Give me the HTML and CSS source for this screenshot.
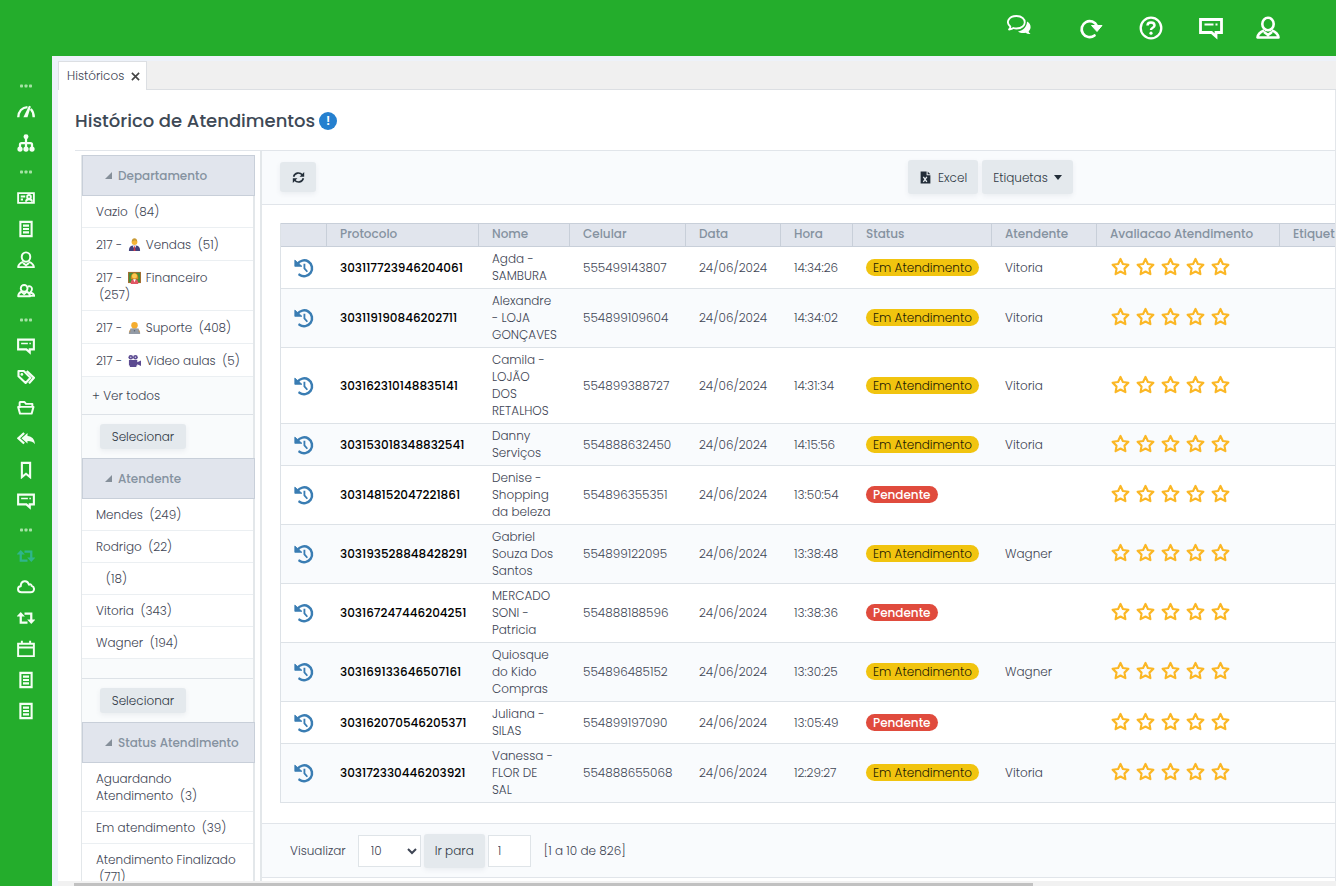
FILE: index.html
```html
<!DOCTYPE html>
<html lang="pt-BR">
<head>
  <meta charset="UTF-8">
  <meta name="viewport" content="width=device-width, initial-scale=1.0">
  <title>Histórico de Atendimentos</title>
  <link rel="stylesheet" href="styles.css">
</head>
<body>

<!-- icons -->
<svg class="sprite" aria-hidden="true">
  <symbol id="i-dots" viewBox="0 0 24 24"><g fill="currentColor"><rect x="4" y="10" width="4" height="4" rx="1"/><rect x="10" y="10" width="4" height="4" rx="1"/><rect x="16" y="10" width="4" height="4" rx="1"/></g></symbol>
  <symbol id="i-gauge" viewBox="0 0 24 24"><path d="M1.700 19C2 11 7 6 14 5.500M22.300 19c0-5-1.500-8.500-4-11" fill="none" stroke="currentColor" stroke-width="3.200"/><path d="M8.500 19 16 3.500l2.500 1L14 19z" fill="currentColor"/></symbol>
  <symbol id="i-tree" viewBox="0 0 24 24"><path d="M12 4v16M4 20v-6q0-2 2-2h12q2 0 2 2v6" fill="none" stroke="currentColor" stroke-width="3"/><g fill="currentColor"><circle cx="12" cy="3.500" r="3.300"/><circle cx="4" cy="20" r="3.500"/><circle cx="12" cy="20" r="3.500"/><circle cx="20" cy="20" r="3.500"/></g></symbol>
  <symbol id="i-card" viewBox="0 0 24 24"><g fill="none" stroke="currentColor" stroke-width="2.500"><path d="M1.500 5.500h21v13h-21z"/><circle cx="16" cy="10.500" r="2.500"/><path d="M12 17c0-4.500 8-4.500 8 0M5 10h6M5 14h3"/></g></symbol>
  <symbol id="i-list" viewBox="0 0 24 24"><path d="M4.500 2.500h15v19h-15zM8 7.500h8M8 12h8M8 16.500h8" fill="none" stroke="currentColor" stroke-width="2.800"/></symbol>
  <symbol id="i-user" viewBox="0 0 24 24"><g fill="none" stroke="currentColor" stroke-width="2.600" stroke-linejoin="round"><ellipse cx="12" cy="8" rx="5.700" ry="6.200"/><path d="M8 14.500C4 16 2 18 1.500 21.500h21C22 18 20 16 16 14.500M8 16l4 3 4-3"/></g></symbol>
  <symbol id="i-users" viewBox="0 0 24 24"><g fill="none" stroke="currentColor" stroke-width="2.500" stroke-linejoin="round"><circle cx="9.500" cy="8.500" r="4.500"/><path d="M14.500 6c6-2 7 5 3 8 3 .500 5 2 5.500 4.500h-5M6 13c-3 1-4.200 3-4.500 6h16c-.500-3-1.500-5-4.500-6l-3.500 3z"/></g></symbol>
  <symbol id="i-comment" viewBox="0 0 24 24"><g fill="none" stroke="currentColor" stroke-width="2.800"><path d="M1.500 3.500h21v13H17v4L12.500 16.500h-11z"/><path d="M5.500 8.500h9M16.500 8.500h2" stroke-width="2"/></g></symbol>
  <symbol id="i-tags" viewBox="0 0 24 24"><path d="M2 4h7l9 9-6.500 7L2 11z" fill="none" stroke="currentColor" stroke-width="2.800" stroke-linejoin="round"/><path d="m13 4 9.500 9-6.500 7.500" fill="none" stroke="currentColor" stroke-width="3"/><circle cx="6.500" cy="8.500" r="1.800" fill="currentColor"/></symbol>
  <symbol id="i-folder" viewBox="0 0 24 24"><path d="M3.500 12V5q0-1 1-1H10l2 2.500h8.500V10M4 19.500h15.500l2.500-9H1.500z" fill="none" stroke="currentColor" stroke-width="2.600" stroke-linejoin="round"/></symbol>
  <symbol id="i-reply" viewBox="0 0 24 24"><path d="M14 4v4c6 .500 9.500 4 10 11-2-3.500-5.500-4.500-10-4.500V18l-8-7z" fill="currentColor"/><path d="m9.500 4-7.500 7 7.500 7" fill="none" stroke="currentColor" stroke-width="3"/></symbol>
  <symbol id="i-bookmark" viewBox="0 0 24 24"><path d="M6.500 2.500h11v19L12 17l-5.500 4.500z" fill="none" stroke="currentColor" stroke-width="2.800"/></symbol>
  <symbol id="i-retweet" viewBox="0 0 24 24"><path d="M14 18H5V9M10 6h9v9" fill="none" stroke="currentColor" stroke-width="3"/><path d="M-.500 10 5 4l5.500 6zM13.500 14h11L19 20z" fill="currentColor"/></symbol>
  <symbol id="i-cloud" viewBox="0 0 24 24"><path d="M6 19c-6 0-6-7.500-1-8C5 3 14 2 16 9c2-1.500 3.500 0 3.500 1.500C24 12 24 19 18 19z" fill="none" stroke="currentColor" stroke-width="2.600" stroke-linejoin="round"/></symbol>
  <symbol id="i-calendar" viewBox="0 0 24 24"><path d="M1.500 5h21v16.500h-21zM1.500 10h21M6.500 1v5M17.500 1v5" fill="none" stroke="currentColor" stroke-width="2.600"/></symbol>
  <symbol id="i-chats" viewBox="0 0 24 24"><path d="M11 18.500c2 1.500 5 2 7.500 1.300 1.500 1 3 1.400 5 1.200-1-.800-1.800-1.700-1.800-2.700 3.300-3.300 2-8.300-1.700-9.800 0 5-3.500 9-9 10z" fill="currentColor"/><path d="M9.500 3c11 0 11 12.500 0 12.500-1 0-2-.100-3-.500-1 .800-2.500 1.300-4.500 1.500 1-1 1.500-2 1.300-3C-1.500 9.500 1.500 3 9.500 3z" fill="none" stroke="currentColor" stroke-width="1.800" stroke-linejoin="round"/></symbol>
  <symbol id="i-reload" viewBox="0 0 24 24"><path d="M15.500 19.500A8 8 0 1 1 18 10" fill="none" stroke="currentColor" stroke-width="2.700" stroke-linecap="round"/><path d="M12.500 9.500H23L18 15.500z" fill="currentColor" stroke="currentColor" stroke-linejoin="round"/></symbol>
  <symbol id="i-help" viewBox="0 0 24 24"><g fill="none" stroke="currentColor" stroke-width="2.300"><circle cx="12" cy="12" r="10.300"/><path d="M8.500 9.500c0-4 7-4 7 0 0 2.500-3.500 2-3.500 4.500" stroke-width="2.500"/></g><circle cx="12" cy="17.200" r="1.600" fill="currentColor"/></symbol>
  <symbol id="i-history" viewBox="0 0 24 24"><path d="M4 7.500A9.500 9.500 0 1 1 6.500 20" fill="none" stroke="currentColor" stroke-width="3" stroke-linecap="round"/><path d="M1 2.500 9.500 10H1z" fill="currentColor" stroke="currentColor" stroke-linejoin="round"/><path d="M12.500 7v5.500l3.500 4" fill="none" stroke="currentColor" stroke-width="2.200"/></symbol>
  <symbol id="i-sync" viewBox="0 0 24 24"><path d="M3 10.500C5 3 14 1.500 19 7M21 13.500C19 21 10 22.500 5 17" fill="none" stroke="currentColor" stroke-width="3"/><path d="M22.500 2v8.500H14zM1.500 22v-8.500H10z" fill="currentColor"/></symbol>
  <symbol id="i-star" viewBox="0 0 24 24"><path d="m12 2.500 3 6.300 7 1-5 4.900 1.200 7-6.200-3.300-6.200 3.300 1.200-7-5-4.900 7-1z" fill="none" stroke="currentColor" stroke-width="2.700" stroke-linejoin="round"/></symbol>
  <symbol id="i-excel" viewBox="0 0 24 24"><path d="M3 1h11v7h7v15H3z" fill="currentColor"/><path d="M16 1v5h5z" fill="currentColor"/><path d="m8 11 6.500 9M14.500 11 8 20" stroke="#e4e9ed" stroke-width="2.500"/></symbol>
  <symbol id="e-vendas" viewBox="0 0 14 14"><path d="M1 14c0-4 1-6 6-6s6 2 6 6z" fill="#42427c"/><path d="m5 8 2 4 2-4z" fill="#fff"/><path d="M6.500 9h1l.500 5H6z" fill="#d13a4a"/><circle cx="7" cy="4.500" r="3" fill="#f5b638"/><path d="M4 4c0-5 6-5 6 0L7.500 2.500z" fill="#c99a35"/></symbol>
  <symbol id="e-financeiro" viewBox="0 0 14 14"><path d="M0 1h14v12H0z" fill="#a86e32"/><path d="M1 2h12v10H1z" fill="#498c38"/><path d="M3 14c0-4 1-5 4-5s4 1 4 5z" fill="#e15765"/><path d="M3 9c-1-9 9-9 8 0z" fill="#d8891f"/><circle cx="7" cy="5.500" r="2.700" fill="#f9c950"/><path d="m5.500 9 1.500 3 1.500-3z" fill="#fff"/></symbol>
  <symbol id="e-suporte" viewBox="0 0 14 14"><path d="M1 14c0-5 2-6 6-6s6 1 6 6z" fill="#b98a49"/><circle cx="7" cy="4.500" r="3.500" fill="#f5ad2e"/><path d="M2.500 8h9v4h1.500v2H1v-2h1.500z" fill="#939ba6"/><circle cx="7" cy="10.500" r=".8" fill="#5c6470"/></symbol>
  <symbol id="e-video" viewBox="0 0 14 14"><g fill="#5c4b91"><circle cx="3" cy="3.500" r="2.500"/><circle cx="8" cy="3.500" r="2.500"/><path d="M1 6.500h9v6H1zM10 9l4-2v6l-4-2zM2 12h7v2H2z"/></g><g fill="#d5cfea"><circle cx="3" cy="3.500" r=".8"/><circle cx="8" cy="3.500" r=".8"/></g></symbol>
</svg>

<header class="topbar">
  <button class="top-btn top-chat" aria-label="Conversas"><svg><use href="#i-chats"/></svg></button>
  <button class="top-btn" aria-label="Recarregar"><svg><use href="#i-reload"/></svg></button>
  <button class="top-btn" aria-label="Ajuda"><svg><use href="#i-help"/></svg></button>
  <button class="top-btn" aria-label="Mensagens"><svg><use href="#i-comment"/></svg></button>
  <button class="top-btn top-user" aria-label="Usuário"><svg><use href="#i-user"/></svg></button>
</header>

<div class="layout">
  <nav class="sidebar" id="sidebar"></nav>

  <main class="main">
    <div class="tabs">
      <div class="tab">Históricos
        <button class="tab-close" aria-label="Fechar"><svg viewBox="0 0 10 10"><path d="m1 1 8 8M9 1 1 9" stroke="currentColor" stroke-width="1.800"/></svg></button>
      </div>
    </div>

    <div class="page">
      <div class="page-title">
        <h1>Histórico de Atendimentos</h1>
        <span class="info">!</span>
      </div>

      <div class="content">
        <aside class="filters">
          <section class="filter">
            <h2>Departamento</h2>
            <ul>
              <li><a href="#">Vazio&nbsp; (84)</a></li>
              <li class="with-icon"><a href="#">217 - <svg><use href="#e-vendas"/></svg> Vendas&nbsp; (51)</a></li>
              <li class="with-icon"><a href="#">217 - <svg><use href="#e-financeiro"/></svg> Financeiro <br>&nbsp;(257)</a></li>
              <li class="with-icon"><a href="#">217 - <svg><use href="#e-suporte"/></svg> Suporte&nbsp; (408)</a></li>
              <li class="with-icon"><a href="#">217 - <svg><use href="#e-video"/></svg> Video aulas&nbsp; (5)</a></li>
            </ul>
            <div class="see-all"><a href="#">+ Ver todos</a></div>
            <div class="filter-action"><button class="btn btn-small">Selecionar</button></div>
          </section>
          <section class="filter">
            <h2>Atendente</h2>
            <ul>
              <li><a href="#">Mendes&nbsp; (249)</a></li>
              <li><a href="#">Rodrigo&nbsp; (22)</a></li>
              <li><a href="#">&nbsp;&nbsp; (18)</a></li>
              <li><a href="#">Vitoria&nbsp; (343)</a></li>
              <li><a href="#">Wagner&nbsp; (194)</a></li>
            </ul>
            <div class="filter-gap"></div>
            <div class="filter-action"><button class="btn btn-small">Selecionar</button></div>
          </section>
          <section class="filter">
            <h2>Status Atendimento</h2>
            <ul>
              <li><a href="#">Aguardando<br>Atendimento&nbsp; (3)</a></li>
              <li><a href="#">Em atendimento&nbsp; (39)</a></li>
              <li><a href="#">Atendimento Finalizado<br>&nbsp;(771)</a></li>
            </ul>
          </section>
        </aside>

        <div class="grid-area">
          <div class="toolbar">
            <button class="btn btn-refresh" aria-label="Atualizar"><svg><use href="#i-sync"/></svg></button>
            <div class="toolbar-group">
              <button class="btn"><svg><use href="#i-excel"/></svg>Excel</button>
              <button class="btn">Etiquetas<span class="caret"></span></button>
            </div>
          </div>

          <div class="table-wrap">
            <table class="grid">
              <colgroup>
                <col class="c-icon"><col class="c-prot"><col class="c-nome"><col class="c-cel"><col class="c-data">
                <col class="c-hora"><col class="c-status"><col class="c-atend"><col class="c-aval"><col class="c-etiq">
              </colgroup>
              <thead>
                <tr>
                  <th></th><th>Protocolo</th><th>Nome</th><th>Celular</th><th>Data</th><th>Hora</th>
                  <th>Status</th><th>Atendente</th><th>Avaliacao Atendimento</th><th>Etiquetas</th>
                </tr>
              </thead>
              <tbody id="rows"></tbody>
            </table>
          </div>

          <div class="pager">
            <label for="perPage">Visualizar</label>
            <select id="perPage"><option>10</option><option>20</option><option>50</option></select>
            <button class="btn">Ir para</button>
            <input type="text" id="pageNumber" value="1" aria-label="Página">
            <span class="pager-info">[1 a 10 de 826]</span>
          </div>
        </div>
      </div>
    </div>
    <div class="hscroll"><div class="hscroll-thumb"></div></div>
  </main>
</div>

<script>
const menu = [
  ["gauge", "tree"],
  ["card", "list", "user", "users"],
  ["comment", "tags", "folder", "reply", "bookmark", "comment"],
  ["retweet", "cloud", "retweet", "calendar", "list", "list"]
];

let nav = "";
menu.forEach((group, g) => {
  nav += `<div class="menu-sep"><svg><use href="#i-dots"/></svg></div>`;
  group.forEach((icon, i) => {
    const active = g === 3 && i === 0 ? " active" : "";
    nav += `<a class="menu-item${active}" href="#" aria-label="${icon}"><svg><use href="#i-${icon}"/></svg></a>`;
  });
});
document.getElementById("sidebar").innerHTML = nav;

const data = [
  ["303117723946204061", "Agda -<br>SAMBURA", "555499143807", "14:34:26", "Em Atendimento", "Vitoria"],
  ["303119190846202711", "Alexandre<br>- LOJA<br>GONÇAVES", "554899109604", "14:34:02", "Em Atendimento", "Vitoria"],
  ["303162310148835141", "Camila -<br>LOJÃO<br>DOS<br>RETALHOS", "554899388727", "14:31:34", "Em Atendimento", "Vitoria"],
  ["303153018348832541", "Danny<br>Serviços", "554888632450", "14:15:56", "Em Atendimento", "Vitoria"],
  ["303148152047221861", "Denise -<br>Shopping<br>da beleza", "554896355351", "13:50:54", "Pendente", ""],
  ["303193528848428291", "Gabriel<br>Souza Dos<br>Santos", "554899122095", "13:38:48", "Em Atendimento", "Wagner"],
  ["303167247446204251", "MERCADO<br>SONI -<br>Patricia", "554888188596", "13:38:36", "Pendente", ""],
  ["303169133646507161", "Quiosque<br>do Kido<br>Compras", "554896485152", "13:30:25", "Em Atendimento", "Wagner"],
  ["303162070546205371", "Juliana -<br>SILAS", "554899197090", "13:05:49", "Pendente", ""],
  ["303172330446203921", "Vanessa -<br>FLOR DE<br>SAL", "554888655068", "12:29:27", "Em Atendimento", "Vitoria"]
];

const stars = `<span class="stars">${`<svg><use href="#i-star"/></svg>`.repeat(5)}</span>`;
let html = "";
data.forEach(([prot, nome, cel, hora, status, atend]) => {
  const cls = status === "Pendente" ? "badge-red" : "badge-yellow";
  html += `<tr>
    <td><button class="history" aria-label="Histórico"><svg><use href="#i-history"/></svg></button></td>
    <td class="prot">${prot}</td><td>${nome}</td><td>${cel}</td><td>24/06/2024</td><td>${hora}</td>
    <td><span class="badge ${cls}">${status}</span></td><td>${atend}</td><td>${stars}</td><td></td>
  </tr>`;
});
document.getElementById("rows").innerHTML = html;
</script>

</body>
</html>
```
FILE: styles.css
```css
* {
  box-sizing: border-box;
}
body {
  margin: 0;
  height: 100vh;
  display: flex;
  flex-direction: column;
  overflow: hidden;
  background: #24ad2c;
  color: #3e4554;
  font-family: Poppins, Inter, sans-serif;
  font-size: 12px;
  font-weight: 300;
  line-height: 17px;
}
button, input, select {
  font: inherit;
  color: inherit;
}
button {
  border: none;
  background: none;
  padding: 0;
  cursor: pointer;
}
a {
  color: inherit;
  text-decoration: none;
}
svg {
  display: block;
}
.sprite {
  display: none;
}

/* top bar */
.topbar {
  flex: none;
  height: 56px;
  display: flex;
  align-items: center;
  justify-content: flex-end;
  gap: 33px;
  padding-right: 56px;
  color: #fff;
}
.top-btn {
  margin-left: 3px;
}
.top-btn svg {
  width: 24px;
  height: 24px;
}
.top-user {
  margin-left: 0;
}
.top-chat {
  margin-right: 12px;
  padding-bottom: 6px;
}

.layout {
  flex: 1;
  min-height: 0;
  display: flex;
}

/* side menu */
.sidebar {
  flex: none;
  width: 52px;
  padding-top: 16px;
  color: #f4fff4;
}
.menu-item, .menu-sep {
  display: flex;
  align-items: center;
  justify-content: center;
}
.menu-item {
  height: 31px;
}
.menu-item svg {
  width: 18px;
  height: 18px;
}
.menu-item.active {
  color: #2fb58c;
}
.menu-sep {
  height: 20px;
  margin-top: 4px;
  color: #a5e3a5;
}
.menu-sep svg {
  width: 18px;
  height: 18px;
}

.main {
  flex: 1;
  min-width: 0;
  display: flex;
  flex-direction: column;
  background: #edf2fa;
  padding: 5px 0 0 6px;
}
.tabs {
  flex: none;
  height: 29px;
  display: flex;
  background: #f0f0f0;
  border-bottom: 1px solid #dcdfe3;
}
.tab {
  display: flex;
  align-items: center;
  gap: 7px;
  height: 29px;
  padding: 0 6px 2px 8px;
  background: #fff;
  border: 1px solid #dcdfe3;
  border-bottom: none;
}
.tab-close {
  padding-top: 2px;
  color: #444;
}
.tab-close svg {
  width: 9px;
  height: 9px;
}

.page {
  flex: 1;
  min-height: 0;
  overflow: hidden;
  background: #fff;
  border-right: 1px solid #e3e6ea;
  padding-left: 17px;
}
.page-title {
  display: flex;
  align-items: center;
  gap: 4px;
  height: 61px;
  padding-top: 1px;
  border-bottom: 1px solid #e1e5ea;
}
h1 {
  margin: 0;
  font-size: 18px;
  line-height: 22px;
  font-weight: 500;
  color: #3e4956;
}
.info {
  width: 18px;
  height: 18px;
  border-radius: 50%;
  background: #2580cf;
  color: #fff;
  font-weight: 600;
  line-height: 18px;
  text-align: center;
}
.content {
  display: flex;
}

/* filters */
.filters {
  flex: none;
  width: 187px;
  padding: 4px 5px 0 6px;
  border-right: 2px solid #e3e7ea;
}
.filter {
  border: 2px solid #e3e7ea;
  border-width: 0 2px 0 1px;
}
.filter h2 {
  display: flex;
  align-items: center;
  gap: 6px;
  margin: 0 -2px 0 0;
  height: 41px;
  padding-left: 22px;
  border: 1px solid #c8cfd9;
  background: #e1e5ed;
  color: #8592a0;
  font-size: 12px;
  font-weight: 500;
}
.filter h2::before {
  content: "";
  border-left: 7px solid transparent;
  border-bottom: 7px solid #858f9a;
}
.filter ul {
  list-style: none;
  margin: 0;
  padding: 0;
}
.filter li {
  padding: 7px 4px 7px 14px;
  border-bottom: 1px solid #ebeff2;
}
.filter li.with-icon {
  padding-top: 8px;
}
.filter li svg {
  display: inline-block;
  width: 13px;
  height: 13px;
  margin: 0 2px;
  vertical-align: -2px;
}
.see-all {
  height: 38px;
  padding: 10px 10px;
  background: #f9fbfc;
  border-bottom: 1px solid #dde2e7;
}
.filter-gap {
  height: 20px;
  background: #f9fbfc;
  border-bottom: 1px solid #dde2e7;
}
.filter-action {
  height: 43px;
  padding: 9px 18px;
  background: #f9fbfc;
}

.btn {
  display: inline-flex;
  align-items: center;
  justify-content: center;
  height: 34px;
  padding: 0 11px;
  border-radius: 3px;
  background: #e4e9ed;
  color: #303a46;
  box-shadow: 0 2px 5px rgba(60, 80, 100, 0.08);
}
.btn svg {
  width: 13px;
  height: 13px;
  color: #222d38;
}
.btn-small {
  height: 25px;
  width: 86px;
}
.btn-refresh {
  width: 36px;
  height: 30px;
}
.toolbar-group .btn svg {
  margin-right: 6px;
}
.caret {
  margin-left: 6px;
  border: 4px solid transparent;
  border-top: 5px solid #222d38;
  border-bottom: none;
}

/* grid */
.grid-area {
  flex: 1;
  min-width: 0;
}
.toolbar {
  display: grid;
  grid-template-columns: 628px auto;
  align-items: center;
  height: 54px;
  padding: 0 0 1px 18px;
  background: #f9fbfd;
  border-bottom: 1px solid #e1e5ea;
}
.toolbar-group {
  display: flex;
  gap: 4px;
}
.table-wrap {
  overflow: hidden;
  padding: 18px 0 20px 18px;
}
.grid {
  table-layout: fixed;
  width: 1120px;
  border-collapse: separate;
  border-spacing: 0;
  border-left: 1px solid #dde2e7;
}
.c-icon { width: 46px; }
.c-prot { width: 152px; }
.c-nome { width: 91px; }
.c-cel { width: 116px; }
.c-data { width: 95px; }
.c-hora { width: 72px; }
.c-status { width: 139px; }
.c-atend { width: 105px; }
.c-aval { width: 183px; }
.grid th {
  height: 24px;
  padding: 0 13px 3px;
  text-align: left;
  font-weight: 500;
  white-space: nowrap;
  color: #8592a0;
  background: #e1e5ed;
  border: 1px solid #c8cfd9;
  border-left: none;
}
.grid td {
  padding: 3px 0 4px 13px;
  white-space: nowrap;
  border-bottom: 1px solid #dde2e7;
}
.grid tr:nth-child(even) td {
  background: #f9fbfd;
}
.grid .prot {
  font-weight: 500;
  color: #000;
}
.history {
  display: block;
  padding-top: 1px;
  color: #3a7db3;
}
.history svg {
  width: 20px;
  height: 20px;
}
.badge {
  display: inline-block;
  height: 17px;
  padding: 0 7px;
  border-radius: 9px;
  vertical-align: top;
}
.badge-yellow {
  background: #f1c40f;
  color: #1c1905;
}
.badge-red {
  background: #e04b3d;
  color: #fff;
  font-weight: 500;
}
.stars {
  display: flex;
  gap: 6px;
  padding: 0 0 2px 1px;
  color: #fbb725;
}
.stars svg {
  width: 19px;
  height: 19px;
}

/* pager */
.pager {
  display: flex;
  align-items: center;
  height: 55px;
  padding-left: 28px;
  background: #f9fbfd;
  border: 1px solid #e1e5ea;
  border-width: 1px 0;
}
.pager select, .pager input {
  height: 32px;
  border: 1px solid #dfe4e8;
  background: #fff;
}
.pager select {
  width: 63px;
  margin: 0 3px 0 12px;
  padding-left: 8px;
}
.pager input {
  width: 43px;
  margin: 0 13px 0 3px;
  padding: 0 9px;
}

.hscroll {
  flex: none;
  height: 5px;
  padding: 2px 0 0 16px;
  background: #f1f1f1;
}
.hscroll-thumb {
  width: 76%;
  height: 3px;
  background: #c1c1c1;
}
```
